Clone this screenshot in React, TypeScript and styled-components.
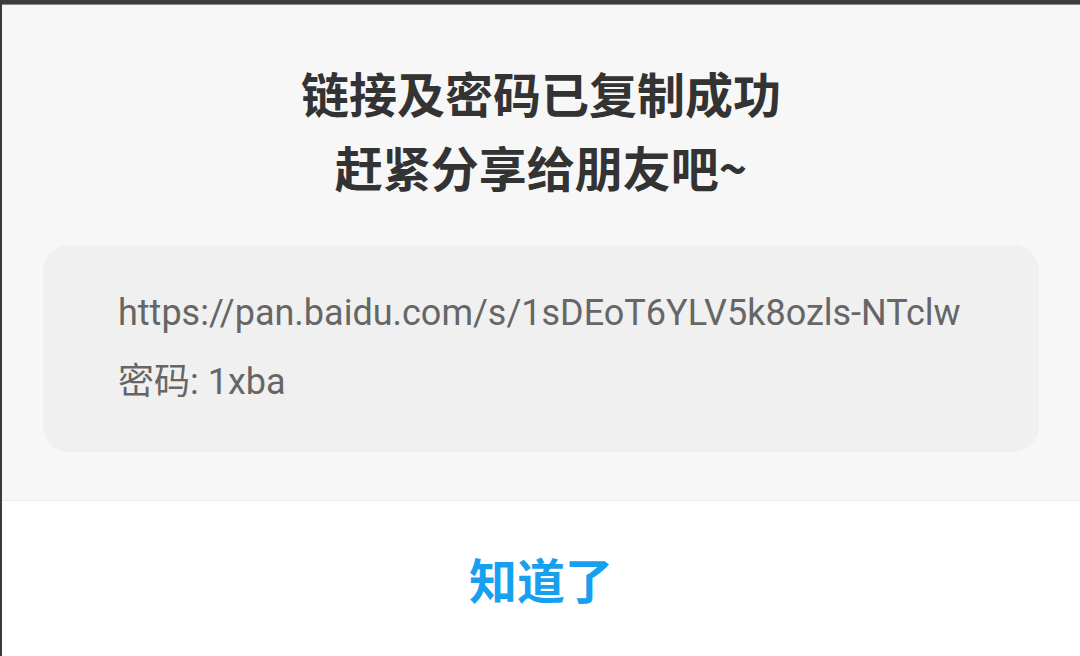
import * as React from "react";
import styled, { createGlobalStyle } from "styled-components";

const GlobalStyle = createGlobalStyle`
  html, body {
    margin: 0;
    padding: 0;
    background: #ffffff;
  }
  * {
    box-sizing: border-box;
  }
`;

const Screen = styled.div`
  width: 1080px;
  height: 656px;
  display: flex;
  flex-direction: column;
  background: #ffffff;
  border-left: 2px solid #3a3a3a;
  overflow: hidden;
  font-family: Roboto, "Noto Sans CJK SC", sans-serif;
`;

const TopBar = styled.div`
  height: 5px;
  flex: none;
  background: #3d3d3d;
  border-bottom: 1px solid #8a8a8a;
`;

const Body = styled.div`
  flex: none;
  height: 496px;
  background: #f7f7f7;
  border-bottom: 1px solid #ececec;
  display: flex;
  flex-direction: column;
  align-items: center;
  padding: 50px 41px 0 41px;
`;

const Title = styled.h2`
  margin: 0;
  font-family: "Noto Sans CJK SC", sans-serif;
  font-weight: 700;
  font-size: 48px;
  line-height: 74px;
  color: #333333;
  text-align: center;
`;

const LinkCard = styled.div`
  align-self: stretch;
  margin-top: 42px;
  height: 207px;
  background: #f0f0f0;
  border-radius: 26px;
  padding: 34px 0 0 75px;
  display: flex;
  flex-direction: column;
`;

const LinkLine = styled.div`
  font-family: Roboto, "Noto Sans CJK SC", sans-serif;
  font-size: 36px;
  line-height: 69px;
  color: #666666;
  white-space: nowrap;
`;

const Footer = styled.div`
  flex: 1;
  display: flex;
  align-items: center;
  justify-content: center;
`;

const OkButton = styled.button`
  border: none;
  background: none;
  padding: 0;
  cursor: pointer;
  font-family: "Noto Sans CJK SC", sans-serif;
  font-weight: 700;
  font-size: 48px;
  line-height: 60px;
  color: #18a0f0;
  margin-bottom: 2px;
`;

export default function App() {
  return (
    <>
      <GlobalStyle />
      <Screen>
        <TopBar />
        <Body>
          <Title>
            链接及密码已复制成功
            <br />
            赶紧分享给朋友吧~
          </Title>
          <LinkCard>
            <LinkLine>https://pan.baidu.com/s/1sDEoT6YLV5k8ozls-NTclw</LinkLine>
            <LinkLine>密码: 1xba</LinkLine>
          </LinkCard>
        </Body>
        <Footer>
          <OkButton>知道了</OkButton>
        </Footer>
      </Screen>
    </>
  );
}
